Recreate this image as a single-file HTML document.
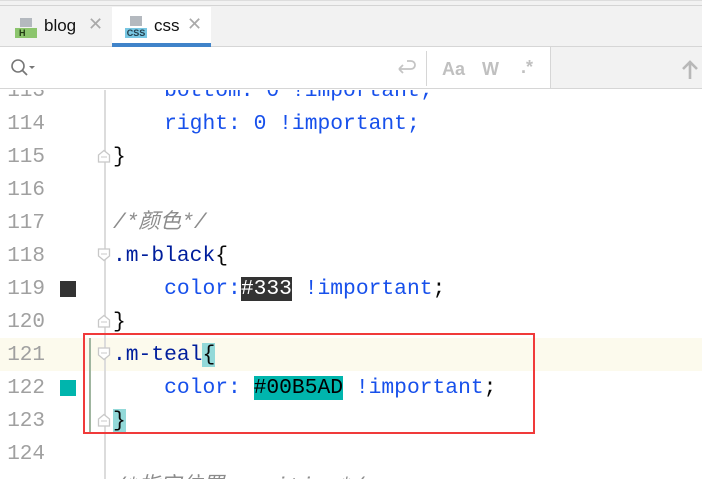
<!DOCTYPE html>
<html><head><meta charset="utf-8"><style>
*{margin:0;padding:0;box-sizing:border-box}
body{width:702px;height:479px;overflow:hidden;background:#fff;position:relative;font-family:"Liberation Sans","Noto Sans CJK SC",sans-serif}
.abs{position:absolute}
.code{font-family:"Liberation Mono","Noto Sans CJK SC",monospace;font-size:21.3px;line-height:33px;white-space:pre}
.ln{position:absolute;right:657px;color:#a0a0a0;font-family:"Liberation Mono",monospace;font-size:21px;line-height:33px;text-align:right;width:60px}
.sel{color:#001e9c}.prop{color:#1750eb}.kw{color:#0033b3}.cm{color:#8c8c8c;font-style:italic}.p{color:#080808}
.fold{position:absolute;left:97px;width:14px;height:14px}
</style></head><body>
<div class="abs" style="left:0;top:0;width:702px;height:47px;background:#f2f2f2;border-top:1px solid #ddd"></div>
<div class="abs" style="left:0;top:5px;width:702px;height:1px;background:#d4d4d4"></div>
<div class="abs" style="left:0;top:46px;width:702px;height:1px;background:#d6d6d6"></div>
<div class="abs" style="left:112px;top:7px;width:99px;height:39px;background:#fff"></div>
<div class="abs" style="left:112px;top:43px;width:99px;height:4px;background:#4083c9"></div>
<div class="abs" style="left:15px;top:18px;width:22px;height:20px">
<div class="abs" style="left:5px;top:0;width:12px;height:9px;background:#b4b9bf"></div>
<div class="abs" style="left:0;top:10px;width:22px;height:10px;background:#8cc56d;color:#213a13;font-size:9px;line-height:10px;padding-left:4px;font-weight:bold">H</div></div>
<div class="abs" style="left:44px;top:16px;font-size:17px;color:#111">blog</div>
<div class="abs" style="left:88px;top:14px;font-size:18px;color:#aaa">✕</div>
<div class="abs" style="left:125px;top:16px;width:22px;height:22px">
<div class="abs" style="left:5px;top:0;width:12px;height:10px;background:#b4b9bf"></div>
<div class="abs" style="left:0;top:12px;width:22px;height:10px;background:#78c7e3;color:#23404d;font-size:9px;line-height:10px;text-align:center;font-weight:bold">CSS</div></div>
<div class="abs" style="left:154px;top:16px;font-size:17px;color:#111">css</div>
<div class="abs" style="left:187px;top:14px;font-size:18px;color:#aaa">✕</div>
<div class="abs" style="left:0;top:47px;width:702px;height:42px;background:#fff;border-bottom:1px solid #d6d6d6"></div>
<div class="abs" style="left:550px;top:47px;width:152px;height:42px;background:#f2f2f2;border-left:1px solid #d6d6d6;border-bottom:1px solid #d6d6d6"></div>
<div class="abs" style="left:426px;top:51px;width:1px;height:35px;background:#d6d6d6"></div>
<svg class="abs" style="left:10px;top:58px" width="26" height="22"><circle cx="8" cy="8" r="6" fill="none" stroke="#777" stroke-width="1.6"/><line x1="12" y1="12" x2="17" y2="17" stroke="#777" stroke-width="1.8"/><path d="M19 8h6l-3 3z" fill="#777"/></svg>
<svg class="abs" style="left:396px;top:58px" width="22" height="20"><path d="M3 11h12a4 4 0 0 0 0-8h-4M3 11l4-4M3 11l4 4" fill="none" stroke="#c4c4c4" stroke-width="1.8"/></svg>
<div class="abs" style="left:442px;top:59px;font-size:18px;font-weight:bold;color:#c0c0c0">Aa</div>
<div class="abs" style="left:482px;top:59px;font-size:18px;font-weight:bold;color:#c0c0c0">W</div>
<div class="abs" style="left:521px;top:57px;font-size:18px;font-weight:bold;color:#c0c0c0">.*</div>
<svg class="abs" style="left:680px;top:59px" width="20" height="22"><path d="M10 20V3M3 10l7-7 7 7" fill="none" stroke="#b8b8b8" stroke-width="2.6"/></svg>
<div class="abs" style="left:0;top:90px;width:702px;height:389px;overflow:hidden">
<div class="abs" style="left:0;top:248px;width:702px;height:33px;background:#fcfaed"></div>
<div class="abs" style="left:104px;top:0;width:2px;height:389px;background:#dcdcdc"></div>
<div class="abs" style="left:0;top:-15px;width:702px">
<div class="ln" style="top:0">113</div><div class="ln" style="top:33px">114</div><div class="ln" style="top:66px">115</div><div class="ln" style="top:99px">116</div><div class="ln" style="top:132px">117</div><div class="ln" style="top:165px">118</div><div class="ln" style="top:198px">119</div><div class="ln" style="top:231px">120</div><div class="ln" style="top:264px">121</div><div class="ln" style="top:297px">122</div><div class="ln" style="top:330px">123</div><div class="ln" style="top:363px">124</div>
<div class="abs" style="left:60px;top:206px;width:16px;height:16px;background:#333"></div>
<div class="abs" style="left:60px;top:305px;width:16px;height:16px;background:#00b5ad"></div>
<svg class="fold" style="top:74px"><path d="M1.5 13V6l5.5-4.5L12.5 6v7z" fill="#fff" stroke="#c8c8c8" stroke-width="1.3"/><path d="M4 8h6" stroke="#c8c8c8"/></svg>
<svg class="fold" style="top:173px"><path d="M1.5 1V8l5.5 4.5L12.5 8V1z" fill="#fff" stroke="#c8c8c8" stroke-width="1.3"/><path d="M4 6h6" stroke="#c8c8c8"/></svg>
<svg class="fold" style="top:239px"><path d="M1.5 13V6l5.5-4.5L12.5 6v7z" fill="#fff" stroke="#c8c8c8" stroke-width="1.3"/><path d="M4 8h6" stroke="#c8c8c8"/></svg>
<svg class="fold" style="top:272px"><path d="M1.5 1V8l5.5 4.5L12.5 8V1z" fill="#fff" stroke="#c8c8c8" stroke-width="1.3"/><path d="M4 6h6" stroke="#c8c8c8"/></svg>
<svg class="fold" style="top:338px"><path d="M1.5 13V6l5.5-4.5L12.5 6v7z" fill="#fff" stroke="#c8c8c8" stroke-width="1.3"/><path d="M4 8h6" stroke="#c8c8c8"/></svg>
<div class="abs code" style="left:113px;top:0"><span class="prop">    bottom: 0 !important;</span>
<span class="prop">    right: 0 !important;</span>
<span class="p">}</span>

<span class="cm">/*颜色*/</span>
<span class="sel">.m-black</span><span class="p">{</span>
<span class="prop">    color:</span><span style="background:#333;color:#fff">#333</span><span class="prop"> !important</span><span class="p">;</span>
<span class="p">}</span>
<span class="sel">.m-teal</span><span class="p" style="background:#93d9d9">{</span>
<span class="prop">    color: </span><span style="background:#00b5ad;color:#000">#00B5AD</span><span class="prop"> !important</span><span class="p">;</span>
<span class="p" style="background:#93d9d9">}</span>

<span class="cm">/*指定位置 position*/</span></div>
</div>
<div class="abs" style="left:89px;top:248px;width:2px;height:96px;background:#9fb59f"></div>
</div>
<div class="abs" style="left:83px;top:333px;width:452px;height:101px;border:2px solid #f03a3a"></div>
</body></html>
